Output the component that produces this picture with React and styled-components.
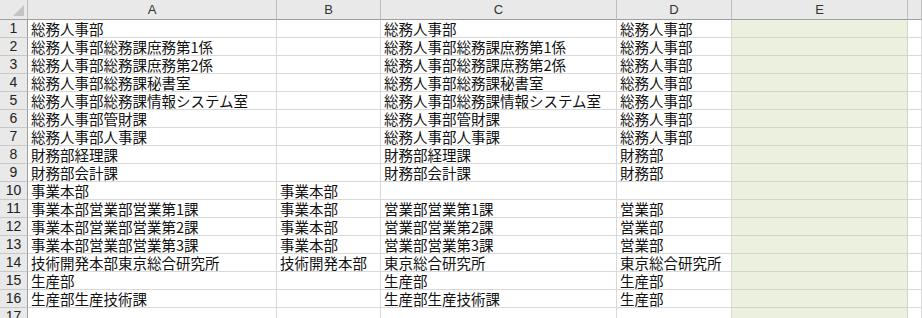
import React from "react";
import styled, { createGlobalStyle } from "styled-components";

const Global = createGlobalStyle`
  html, body { margin: 0; padding: 0; background: #fff; overflow: hidden; }
  * { box-sizing: border-box; }
`;

const Sheet = styled.div`
  display: grid;
  grid-template-columns: 28px 249px 104px 236px 115px 176px 1fr;
  grid-template-rows: 20px repeat(17, 18px);
  width: 922px;
  height: 318px;
  overflow: hidden;
  font-family: "Noto Sans CJK JP", "Noto Sans", sans-serif;
`;

const Corner = styled.div`
  position: relative;
  background: #e9e9e9;
  border-right: 1px solid #bdbdbd;
  border-bottom: 1px solid #9e9e9e;
  &::after {
    content: "";
    position: absolute;
    right: 3px;
    bottom: 3px;
    width: 0;
    height: 0;
    border-left: 11px solid transparent;
    border-bottom: 11px solid #c4c4c4;
  }
`;

const ColHeader = styled.div`
  background: #e9e9e9;
  border-right: 1px solid #bdbdbd;
  border-bottom: 1px solid #9e9e9e;
  display: flex;
  align-items: center;
  justify-content: center;
  font-family: "Liberation Sans", Arial, sans-serif;
  font-size: 13px;
  line-height: 18px;
  color: #333;
`;

const RowHeader = styled.div`
  background: #e9e9e9;
  border-right: 1px solid #9e9e9e;
  border-bottom: 1px solid #c8c8c8;
  display: flex;
  align-items: center;
  justify-content: center;
  font-family: "Liberation Sans", Arial, sans-serif;
  font-size: 14px;
  line-height: 17px;
  color: #222;
`;

const Cell = styled.div`
  background: ${(p) => (p.$fill ? "#ebf1de" : "#fff")};
  border-right: 1px solid ${(p) => (p.$fill ? "#d3d8c4" : "#d9d9d9")};
  border-bottom: 1px solid ${(p) => (p.$fill ? "#d3d8c4" : "#d9d9d9")};
  padding: 0 0 0 3px;
  font-size: 14.5px;
  line-height: 17px;
  color: #111;
  white-space: nowrap;
  overflow: hidden;
`;

const cols = ["A", "B", "C", "D", "E", ""];

const rows = [
  ["総務人事部", "", "総務人事部", "総務人事部"],
  ["総務人事部総務課庶務第1係", "", "総務人事部総務課庶務第1係", "総務人事部"],
  ["総務人事部総務課庶務第2係", "", "総務人事部総務課庶務第2係", "総務人事部"],
  ["総務人事部総務課秘書室", "", "総務人事部総務課秘書室", "総務人事部"],
  ["総務人事部総務課情報システム室", "", "総務人事部総務課情報システム室", "総務人事部"],
  ["総務人事部管財課", "", "総務人事部管財課", "総務人事部"],
  ["総務人事部人事課", "", "総務人事部人事課", "総務人事部"],
  ["財務部経理課", "", "財務部経理課", "財務部"],
  ["財務部会計課", "", "財務部会計課", "財務部"],
  ["事業本部", "事業本部", "", ""],
  ["事業本部営業部営業第1課", "事業本部", "営業部営業第1課", "営業部"],
  ["事業本部営業部営業第2課", "事業本部", "営業部営業第2課", "営業部"],
  ["事業本部営業部営業第3課", "事業本部", "営業部営業第3課", "営業部"],
  ["技術開発本部東京総合研究所", "技術開発本部", "東京総合研究所", "東京総合研究所"],
  ["生産部", "", "生産部", "生産部"],
  ["生産部生産技術課", "", "生産部生産技術課", "生産部"],
  ["", "", "", ""],
];

export default function App() {
  return (
    <>
      <Global />
      <Sheet>
        <Corner />
        {cols.map((c, i) => (
          <ColHeader key={"h" + i}>{c}</ColHeader>
        ))}
        {rows.map((r, ri) => (
          <React.Fragment key={ri}>
            <RowHeader>{ri + 1}</RowHeader>
            {r.map((v, ci) => (
              <Cell key={ci}>{v}</Cell>
            ))}
            <Cell $fill />
            <Cell />
          </React.Fragment>
        ))}
      </Sheet>
    </>
  );
}
